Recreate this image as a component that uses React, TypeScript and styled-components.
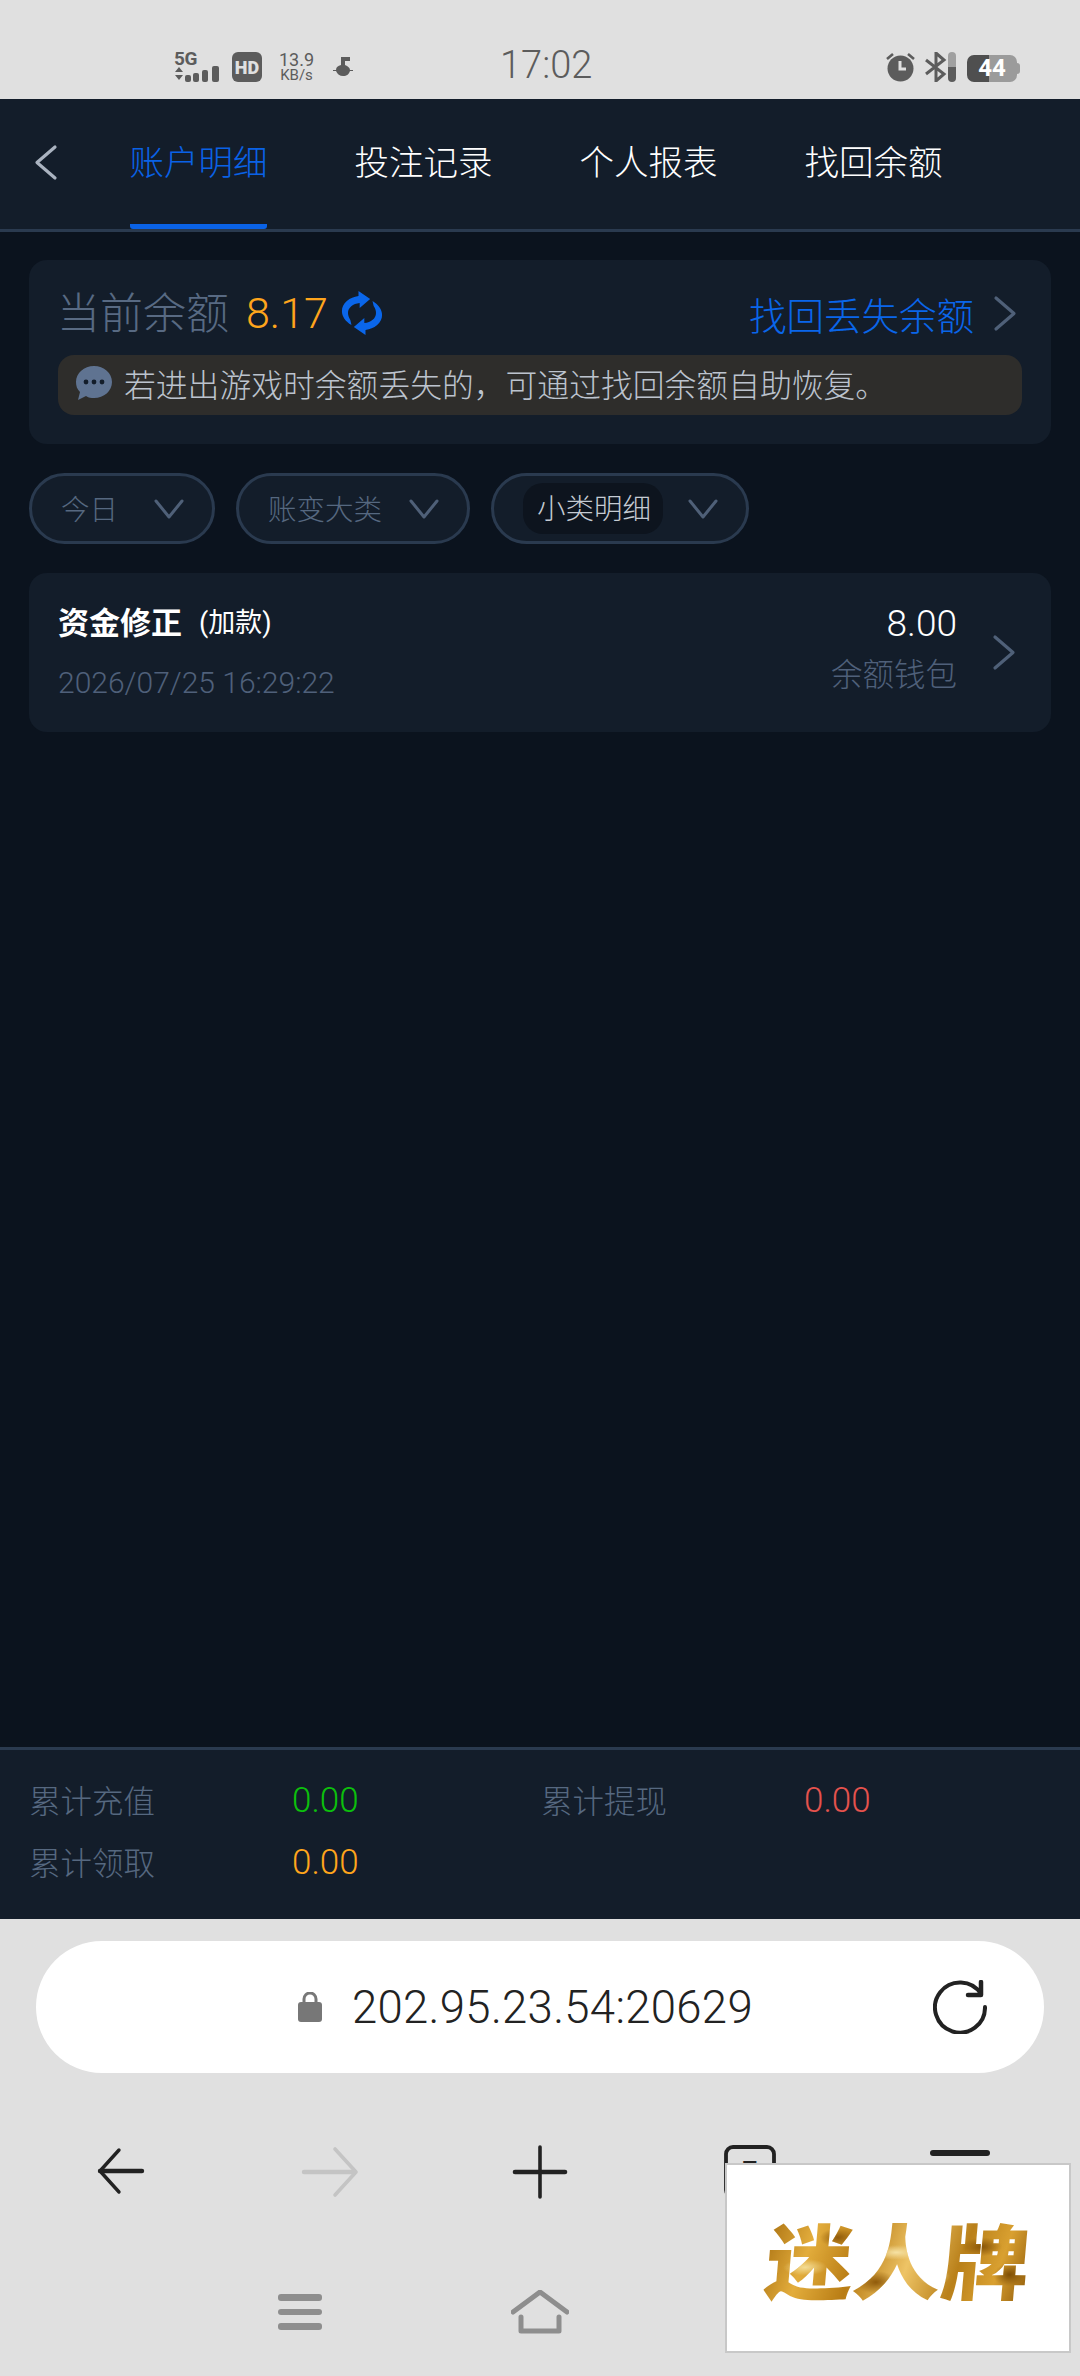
import styled, { createGlobalStyle } from "styled-components";

const GlobalStyle = createGlobalStyle`
  html, body {
    margin: 0;
    padding: 0;
    background: #e0e0e0;
  }
  * {
    box-sizing: border-box;
  }
  body {
    font-family: Roboto, "Noto Sans CJK SC", sans-serif;
  }
`;

const Page = styled.div`
  position: relative;
  width: 1080px;
  height: 2376px;
  display: flex;
  flex-direction: column;
  overflow: hidden;
`;

/* status bar */
const StatusBar = styled.div`
  height: 99px;
  flex: none;
  display: flex;
  align-items: flex-end;
  padding: 0 60px 17px 174px;
  background: #e0e0e0;
  color: #5c5c5c;
`;
const StatusLeft = styled.div`
  width: 326px;
  height: 30px;
  display: flex;
  align-items: center;
`;
const SignalBox = styled.div`
  width: 46px;
  height: 30px;
  position: relative;
  margin-right: 12px;
`;
const FiveG = styled.span`
  position: absolute;
  left: 0;
  top: -2px;
  font-size: 19px;
  line-height: 17px;
  font-weight: 700;
  letter-spacing: -0.5px;
`;
const HdBadge = styled.div`
  width: 30px;
  height: 30px;
  border-radius: 6px;
  background: #5c5c5c;
  color: #e0e0e0;
  font-size: 18px;
  font-weight: 900;
  display: flex;
  align-items: center;
  justify-content: center;
  margin-right: 17px;
`;
const Speed = styled.div`
  width: 35px;
  display: flex;
  flex-direction: column;
  align-items: center;
  margin-right: 19px;
`;
const SpeedValue = styled.span`
  font-size: 18px;
  line-height: 17px;
  white-space: nowrap;
`;
const SpeedUnit = styled.span`
  font-size: 15px;
  line-height: 15px;
  white-space: nowrap;
`;
const Clock = styled.div`
  width: 90px;
  font-size: 38px;
  line-height: 34px;
  font-weight: 300;
  text-align: center;
  white-space: nowrap;
`;
const StatusRight = styled.div`
  margin-left: auto;
  height: 30px;
  display: flex;
  align-items: center;
  gap: 10px;
`;
const Battery = styled.div`
  position: relative;
  width: 50px;
  height: 27px;
  margin: 2px 3px 0 1px;
  border-radius: 7px;
  background: linear-gradient(90deg, #4f4f4f 0, #4f4f4f 22px, #9b9b9b 22px);
  color: #fff;
  font-size: 24px;
  font-weight: 700;
  line-height: 27px;
  text-align: center;
  &::after {
    content: "";
    position: absolute;
    right: -3px;
    top: 8px;
    width: 3px;
    height: 11px;
    border-radius: 0 3px 3px 0;
    background: #9b9b9b;
  }
`;

/* header */
const Header = styled.div`
  height: 133px;
  flex: none;
  display: flex;
  background: #131d2a;
  border-bottom: 3px solid #2a3a4f;
`;
const BackSlot = styled.div`
  width: 130px;
  display: flex;
  align-items: center;
  padding: 0 0 4px 34px;
`;
const Tabs = styled.div`
  display: flex;
  gap: 88px;
`;
const Tab = styled.div<{ $active?: boolean }>`
  position: relative;
  width: 137px;
  display: flex;
  align-items: center;
  justify-content: center;
  padding-bottom: 4px;
  font-size: 34.5px;
  font-weight: 300;
  white-space: nowrap;
  color: ${(props) => (props.$active ? "#0a62e6" : "#ffffff")};
  border-bottom: 5px solid ${(props) => (props.$active ? "#0a62e6" : "transparent")};
  border-radius: 0 0 3px 3px;
`;

/* main */
const Main = styled.div`
  flex: 1;
  padding: 28px 29px 0 29px;
  background: #0b131e;
`;
const BalanceCard = styled.div`
  height: 184px;
  padding: 30px 29px 29px;
  background: #131d2a;
  border-radius: 18px;
`;
const BalanceRow = styled.div`
  height: 46px;
  display: flex;
  align-items: center;
  padding-right: 5px;
`;
const BalanceLabel = styled.span`
  font-size: 43px;
  line-height: 46px;
  margin-top: 1px;
  margin-left: -1px;
  font-weight: 300;
  color: #586a83;
`;
const BalanceValue = styled.span`
  margin: 0 13px 0 17px;
  font-size: 43px;
  font-weight: 300;
  color: #ffa51c;
`;
const RecoverLink = styled.span`
  margin-left: auto;
  margin-right: 19px;
  font-size: 37.5px;
  font-weight: 300;
  color: #0a66ea;
`;
const Notice = styled.div`
  height: 60px;
  margin-top: 19px;
  padding: 0 0 4px 17px;
  display: flex;
  align-items: center;
  gap: 11px;
  background: #2e2d2b;
  border-radius: 16px;
  font-size: 31.8px;
  font-weight: 300;
  color: #bcc3ce;
`;
const Filters = styled.div`
  display: flex;
  gap: 21px;
  margin-top: 29px;
`;
const FilterPill = styled.div<{ $width: number }>`
  width: ${(props) => props.$width}px;
  height: 71px;
  padding: 0 28px 0 29px;
  display: flex;
  align-items: center;
  justify-content: space-between;
  background: #131d2a;
  border: 3px solid #2a3a4f;
  border-radius: 36px;
  font-size: 28.5px;
  font-weight: 300;
  color: #566880;
`;
const FilterLabel = styled.span`
  margin-top: -3px;
`;
const FilterChip = styled.span`
  height: 51px;
  padding: 0 12px 4px 14px;
  display: flex;
  align-items: center;
  background: #0d141e;
  border-radius: 20px;
  color: #c5cbd3;
`;
const RecordCard = styled.div`
  height: 159px;
  margin-top: 29px;
  padding: 0 35px 0 29px;
  display: flex;
  align-items: center;
  background: #131d2a;
  border-radius: 18px;
`;
const RecordLeft = styled.div`
  flex: 1;
`;
const RecordTitle = styled.div`
  display: flex;
  align-items: center;
  height: 40px;
  margin-top: -2px;
  gap: 17px;
  font-size: 31px;
  font-weight: 700;
  color: #ffffff;
`;
const RecordTag = styled.span`
  font-size: 27px;
  font-weight: 400;
`;
const RecordDate = styled.div`
  margin-top: 23px;
  font-size: 30px;
  font-weight: 300;
  line-height: 40px;
  color: #4f607a;
`;
const RecordRight = styled.div`
  display: flex;
  flex-direction: column;
  align-items: flex-end;
  margin-right: 35px;
`;
const RecordAmount = styled.div`
  margin-top: -6px;
  font-size: 37px;
  font-weight: 300;
  line-height: 40px;
  color: #ffffff;
`;
const RecordWallet = styled.div`
  margin-top: 12px;
  font-size: 31.5px;
  font-weight: 300;
  line-height: 40px;
  color: #4f607a;
`;

/* totals */
const Totals = styled.div`
  height: 172px;
  flex: none;
  padding: 19px 0 0 29px;
  display: grid;
  grid-template-columns: 263px 249px 263px 1fr;
  grid-auto-rows: 62px;
  align-items: center;
  background: #131d2a;
  border-top: 3px solid #2a3a4f;
`;
const TotalLabel = styled.span`
  margin-top: -3px;
  font-size: 31.5px;
  font-weight: 300;
  color: #566880;
`;
const TotalValue = styled.span<{ $color: string }>`
  font-size: 35px;
  font-weight: 300;
  color: ${(props) => props.$color};
`;

/* browser chrome */
const BrowserChrome = styled.div`
  flex: none;
  height: 457px;
  background: #e0e0e0;
  padding-top: 22px;
`;
const UrlBar = styled.div`
  position: relative;
  height: 132px;
  margin: 0 36px;
  display: flex;
  align-items: center;
  padding-left: 261px;
  background: #ffffff;
  border-radius: 66px;
`;
const UrlText = styled.span`
  margin-left: 29px;
  font-size: 45.5px;
  font-weight: 300;
  color: #222222;
  letter-spacing: 0.3px;
`;
const UrlReload = styled.div`
  margin-left: auto;
  margin-right: 57px;
  display: flex;
`;
const BrowserNav = styled.div`
  height: 60px;
  margin-top: 69px;
  padding: 0 15px;
  display: grid;
  grid-template-columns: repeat(5, 210px);
  justify-items: center;
  align-items: center;
`;
const SystemNav = styled.div`
  height: 60px;
  margin-top: 80px;
  padding: 0 180px;
  display: grid;
  grid-template-columns: repeat(3, 240px);
  justify-items: center;
  align-items: center;
`;
const AdBox = styled.div`
  position: absolute;
  left: 725px;
  top: 2163px;
  width: 346px;
  height: 190px;
  display: flex;
  align-items: center;
  justify-content: center;
  background: #ffffff;
  border: 2px solid #c8c8c8;
`;
const AdLogo = styled.span`
  font-family: "Noto Sans CJK SC", sans-serif;
  font-size: 88px;
  line-height: 100px;
  font-weight: 900;
  white-space: nowrap;
  transform: skewX(-5deg) scaleY(0.93);
  color: transparent;
  background:
    radial-gradient(ellipse 22px 9px at 40px 60px, #f3dc95 0, transparent 100%),
    radial-gradient(ellipse 18px 10px at 70px 28px, #8f5a0a 0, transparent 100%),
    radial-gradient(ellipse 24px 8px at 130px 44px, #f6e2a4 0, transparent 100%),
    radial-gradient(ellipse 20px 12px at 112px 76px, #8f5a0a 0, transparent 100%),
    radial-gradient(ellipse 16px 9px at 170px 70px, #f3dc95 0, transparent 100%),
    radial-gradient(ellipse 20px 10px at 215px 38px, #875408 0, transparent 100%),
    radial-gradient(ellipse 16px 12px at 245px 68px, #7e4e06 0, transparent 100%),
    linear-gradient(105deg, #a86f10 0%, #e3ad3c 18%, #b87c14 36%, #eec466 54%, #b9801a 72%, #d9a030 86%, #8f5a0a 100%);
  -webkit-background-clip: text;
  background-clip: text;
`;

function Chevron({ color, dir = "right" }: { color: string; dir?: "left" | "right" }) {
  return (
    <svg width="24" height="37" viewBox="0 0 24 37" fill="none">
      <path
        d={dir === "right" ? "M3 3l18 15.5L3 34" : "M21 3L3 18.5 21 34"}
        stroke={color}
        strokeWidth="3.2"
        strokeLinecap="round"
        strokeLinejoin="round"
      />
    </svg>
  );
}

function DownArrow() {
  return (
    <svg width="30" height="20" viewBox="0 0 30 20" fill="none">
      <path d="M2 2l13 16L28 2" stroke="#4f6078" strokeWidth="3" strokeLinecap="round" strokeLinejoin="round" />
    </svg>
  );
}

function RefreshIcon() {
  return (
    <svg width="42" height="44" viewBox="3 0 36 44" preserveAspectRatio="none" fill="none">
      <path d="M12 34C3 28 1 17 8 10c3-3 6-4 10-5V0l10 8-9 9v-5c-8 1-13 8-8 17z" fill="#0a66ea" />
      <path d="M30 10c9 6 11 17 4 24-3 3-6 4-10 5v5l-10-8 9-9v5c8-1 13-8 8-17z" fill="#0a66ea" />
    </svg>
  );
}

function BubbleIcon() {
  return (
    <svg width="38" height="36" viewBox="0 0 38 36">
      <path d="M19 1c10 0 18 7 18 16s-8 16-18 16c-3 0-5 0-8-2l-8 4 2-8c-3-3-4-6-4-10C1 8 9 1 19 1z" fill="#5f7391" />
      <circle cx="11" cy="17" r="2.4" fill="#131d2a" />
      <circle cx="19" cy="17" r="2.4" fill="#131d2a" />
      <circle cx="27" cy="17" r="2.4" fill="#131d2a" />
    </svg>
  );
}

function SignalIcon() {
  return (
    <svg width="46" height="16" viewBox="0 0 46 16" fill="#5c5c5c" style={{ position: "absolute", left: 0, bottom: 0 }}>
      <path d="M1 6l4-5 4 5zM1 9h8l-4 5z" />
      <rect x="11" y="9" width="6" height="7" rx="2" />
      <rect x="19" y="7" width="6" height="9" rx="2" />
      <rect x="28" y="4" width="6" height="12" rx="2" />
      <rect x="38" y="0" width="7" height="16" rx="2" />
    </svg>
  );
}

function NotifyIcon() {
  return (
    <svg width="20" height="20" viewBox="0 0 20 20" fill="#5c5c5c">
      <path d="M8 0h9v4h-5v4c3 1 5 3 5 5h3v1h-3c-1 3-3 5-7 5-3 0-6-2-7-5H0v-1h3c0-3 2-4 5-5z" />
    </svg>
  );
}

function AlarmIcon() {
  return (
    <svg width="29" height="30" viewBox="0 0 29 30">
      <circle cx="14.5" cy="16.5" r="13" fill="#5c5c5c" />
      <path d="M14 9v8h6" stroke="#e0e0e0" strokeWidth="3" fill="none" />
      <path d="M1 7l6-5M28 7l-6-5" stroke="#5c5c5c" strokeWidth="2.6" />
    </svg>
  );
}

function BluetoothIcon() {
  return (
    <svg width="31" height="30" viewBox="0 0 31 30" fill="none">
      <path d="M1 8l18 14-8 7V1l8 7L1 22" stroke="#5c5c5c" strokeWidth="3" />
      <path d="M23 15v-11a4 4 0 0 1 8 0v11z" fill="#a0a0a0" />
      <path d="M23 15h8v11a4 4 0 0 1-8 0z" fill="#5c5c5c" />
    </svg>
  );
}

function LockIcon() {
  return (
    <svg width="26" height="30" viewBox="0 0 26 30" fill="none">
      <path d="M7 12V7a6 6 0 0 1 12 0v5" stroke="#777" strokeWidth="3" />
      <rect x="1" y="10" width="24" height="20" rx="3" fill="#777" />
    </svg>
  );
}

function ReloadIcon() {
  return (
    <svg width="54" height="54" viewBox="0 0 54 54" fill="none">
      <path d="M48 14A25 25 0 1 0 52 27" stroke="#222" strokeWidth="4" strokeLinecap="round" />
      <path d="M48 2v13H35" stroke="#222" strokeWidth="4.500" strokeLinecap="round" strokeLinejoin="round" />
    </svg>
  );
}

function BackArrow() {
  return (
    <svg width="60" height="60" viewBox="0 0 60 60" fill="none">
      <path d="M29 9L10 30l19 21" transform="translate(0 -1)" stroke="#222" strokeWidth="3.4" strokeLinecap="round" strokeLinejoin="round" />
      <path d="M10 29h42" stroke="#222" strokeWidth="4.4" strokeLinecap="round" />
    </svg>
  );
}

function ForwardArrow() {
  return (
    <svg width="60" height="60" viewBox="0 0 60 60" fill="none">
      <path d="M35 7l21 23-21 23" stroke="#c4c4c4" strokeWidth="3.6" strokeLinecap="round" strokeLinejoin="round" />
      <path d="M4 30h50" stroke="#c4c4c4" strokeWidth="4.4" strokeLinecap="round" />
    </svg>
  );
}

function PlusIcon() {
  return (
    <svg width="60" height="60" viewBox="0 0 60 60" fill="none">
      <path d="M30 5v50" stroke="#222" strokeWidth="3.6" strokeLinecap="round" />
      <path d="M5 30h50" stroke="#222" strokeWidth="4.6" strokeLinecap="round" />
    </svg>
  );
}

function TabsIcon() {
  return (
    <svg width="60" height="60" viewBox="0 0 60 60" fill="none">
      <rect x="6" y="5" width="48" height="50" rx="7" stroke="#222" strokeWidth="3.8" />
      <text x="30" y="38" textAnchor="middle" fontSize="26" fontWeight="700" fill="#222">7</text>
    </svg>
  );
}

function MenuIcon() {
  return (
    <svg width="60" height="60" viewBox="0 0 60 60" fill="#222">
      <rect x="0" y="8" width="60" height="6" rx="3" />
      <rect x="0" y="27" width="60" height="6" rx="3" />
      <rect x="0" y="46" width="60" height="6" rx="3" />
    </svg>
  );
}

function SystemMenuIcon() {
  return (
    <svg width="46" height="38" viewBox="0 0 46 38" fill="#8e8e8e">
      <rect x="1" y="1" width="44" height="7" rx="3" />
      <rect x="1" y="16" width="44" height="6" rx="3" />
      <rect x="1" y="30" width="44" height="7" rx="3" />
    </svg>
  );
}

function SystemHomeIcon() {
  return (
    <svg width="58" height="44" viewBox="0 0 58 44" fill="none">
      <path d="M2 22L29 2l27 20" stroke="#8e8e8e" strokeWidth="5" strokeLinecap="round" strokeLinejoin="round" />
      <path d="M10 27v14h38V27" stroke="#8e8e8e" strokeWidth="5" strokeLinecap="round" strokeLinejoin="round" />
    </svg>
  );
}

export default function App() {
  return (
    <Page>
      <GlobalStyle />
      <StatusBar>
        <StatusLeft>
          <SignalBox>
            <FiveG>5G</FiveG>
            <SignalIcon />
          </SignalBox>
          <HdBadge>HD</HdBadge>
          <Speed>
            <SpeedValue>13.9</SpeedValue>
            <SpeedUnit>KB/s</SpeedUnit>
          </Speed>
          <NotifyIcon />
        </StatusLeft>
        <Clock>17:02</Clock>
        <StatusRight>
          <AlarmIcon />
          <BluetoothIcon />
          <Battery>44</Battery>
        </StatusRight>
      </StatusBar>

      <Header>
        <BackSlot>
          <Chevron color="#aab3c0" dir="left" />
        </BackSlot>
        <Tabs>
          <Tab $active>账户明细</Tab>
          <Tab>投注记录</Tab>
          <Tab>个人报表</Tab>
          <Tab>找回余额</Tab>
        </Tabs>
      </Header>

      <Main>
        <BalanceCard>
          <BalanceRow>
            <BalanceLabel>当前余额</BalanceLabel>
            <BalanceValue>8.17</BalanceValue>
            <RefreshIcon />
            <RecoverLink>找回丢失余额</RecoverLink>
            <Chevron color="#4f6078" />
          </BalanceRow>
          <Notice>
            <BubbleIcon />
            若进出游戏时余额丢失的，可通过找回余额自助恢复。
          </Notice>
        </BalanceCard>

        <Filters>
          <FilterPill $width={186}>
            <FilterLabel>今日</FilterLabel>
            <DownArrow />
          </FilterPill>
          <FilterPill $width={234}>
            <FilterLabel>账变大类</FilterLabel>
            <DownArrow />
          </FilterPill>
          <FilterPill $width={258}>
            <FilterChip>小类明细</FilterChip>
            <DownArrow />
          </FilterPill>
        </Filters>

        <RecordCard>
          <RecordLeft>
            <RecordTitle>
              资金修正
              <RecordTag>(加款)</RecordTag>
            </RecordTitle>
            <RecordDate>2026/07/25 16:29:22</RecordDate>
          </RecordLeft>
          <RecordRight>
            <RecordAmount>8.00</RecordAmount>
            <RecordWallet>余额钱包</RecordWallet>
          </RecordRight>
          <Chevron color="#4f6078" />
        </RecordCard>
      </Main>

      <Totals>
        <TotalLabel>累计充值</TotalLabel>
        <TotalValue $color="#0cc00c">0.00</TotalValue>
        <TotalLabel>累计提现</TotalLabel>
        <TotalValue $color="#e5524d">0.00</TotalValue>
        <TotalLabel>累计领取</TotalLabel>
        <TotalValue $color="#ffa51c">0.00</TotalValue>
      </Totals>

      <BrowserChrome>
        <UrlBar>
          <LockIcon />
          <UrlText>202.95.23.54:20629</UrlText>
          <UrlReload>
            <ReloadIcon />
          </UrlReload>
        </UrlBar>
        <BrowserNav>
          <BackArrow />
          <ForwardArrow />
          <PlusIcon />
          <TabsIcon />
          <MenuIcon />
        </BrowserNav>
        <SystemNav>
          <SystemMenuIcon />
          <SystemHomeIcon />
        </SystemNav>
      </BrowserChrome>

      <AdBox>
        <AdLogo>迷人牌</AdLogo>
      </AdBox>
    </Page>
  );
}
